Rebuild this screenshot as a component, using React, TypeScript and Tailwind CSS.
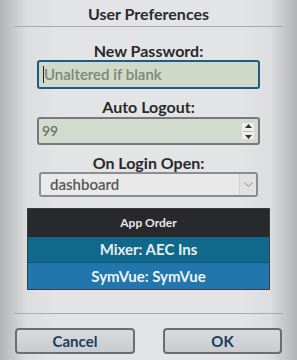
import React from "react"

function Label({ children }: { children: React.ReactNode }) {
    return <div className="text-center text-[16px] font-bold leading-[18px] text-[#2a2a2a]">{children}</div>
}

export default function App() {
    return <div className="w-[297px] h-[360px] overflow-hidden font-['Lato',sans-serif] bg-[linear-gradient(to_right,#b3b4b6,#dcdddf_9%,#e3e4e6_20%,#e3e4e6_80%,#dcdddf_91%,#b3b4b6)] flex flex-col">
        <div className="h-[26px] flex items-center justify-center pt-[2px] text-[16px] font-bold text-[#2b2b2b]">User Preferences</div>
        <div className="mx-[14px] h-[1px] bg-[#a9aaac]"></div>

        <div className="mt-[15px]"><Label>New Password:</Label></div>
        <div className="mx-[37px] h-[29px] rounded-[3px] border-2 border-[#1d5a86] bg-[#cfd9c7] flex items-center pl-[4px]">
            <div className="w-[1px] h-[17px] bg-[#222]"></div>
            <span className="text-[15px] text-[#80837d] font-semibold leading-none">Unaltered if blank</span>
        </div>

        <div className="mt-[9px]"><Label>Auto Logout:</Label></div>
        <div className="mx-[37px] mt-[1px] h-[28px] rounded-[3px] border-2 border-[#77797b] bg-[#d3dbcf] flex items-center pl-[3px] pr-[3px]">
            <span className="flex-1 text-[14px] text-[#6c6f6a] font-semibold leading-none">99</span>
            <div className="w-[14px] h-[18px] bg-[#eeeeee] border border-[#d6d6d6] flex flex-col items-center justify-center gap-[3px]">
                <svg width="7" height="4" viewBox="0 0 7 4"><path d="M3.5 0L7 4H0z" fill="#333" /></svg>
                <div className="w-[10px] h-[1px] bg-[#bbb]"></div>
                <svg width="7" height="4" viewBox="0 0 7 4"><path d="M0 0h7L3.5 4z" fill="#333" /></svg>
            </div>
        </div>

        <div className="mt-[9px]"><Label>On Login Open:</Label></div>
        <div className="mx-[39px] h-[25px] rounded-[3px] border-2 border-[#8b8c8e] bg-[#e9e9ea] flex items-center">
            <span className="flex-1 pl-[9px] text-[15px] text-[#555657] font-semibold leading-none">dashboard</span>
            <div className="w-[17px] h-full border-l border-[#cfcfcf] bg-[#e1e1e2] flex items-center justify-center">
                <svg width="9" height="5" viewBox="0 0 9 5"><path d="M0.5 0.5L4.5 4.5L8.5 0.5" stroke="#888" fill="none" /></svg>
            </div>
        </div>

        <div className="mx-[27px] mt-[11px] border border-[#3a3c3e] flex flex-col">
            <div className="h-[28px] bg-[#27292c] flex items-center justify-center text-[12px] font-bold text-[#e8e8e8]">App Order</div>
            <div className="h-[26px] bg-[#10698a] border-b border-[#0d5a78] flex items-center justify-center text-[15px] font-bold text-[#e9eef0]">Mixer: AEC Ins</div>
            <div className="h-[26px] bg-[#2177ad] flex items-center justify-center text-[15px] font-bold text-[#eef3f6]">SymVue: SymVue</div>
        </div>

        <div className="mx-[14px] mt-[23px] h-[1px] bg-[#a9aaac]"></div>

        <div className="mt-[14px] px-[15px] flex justify-between">
            <button className="w-[120px] h-[26px] rounded-[4px] border-2 border-[#6b6d70] bg-[linear-gradient(#d8dadc,#c9cccf)] text-[15px] font-bold text-[#1c3b5e] leading-none">Cancel</button>
            <button className="w-[119px] h-[26px] rounded-[4px] border-2 border-[#6b6d70] bg-[linear-gradient(#d8dadc,#c9cccf)] text-[15px] font-bold text-[#1c3b5e] leading-none">OK</button>
        </div>
    </div>
}
